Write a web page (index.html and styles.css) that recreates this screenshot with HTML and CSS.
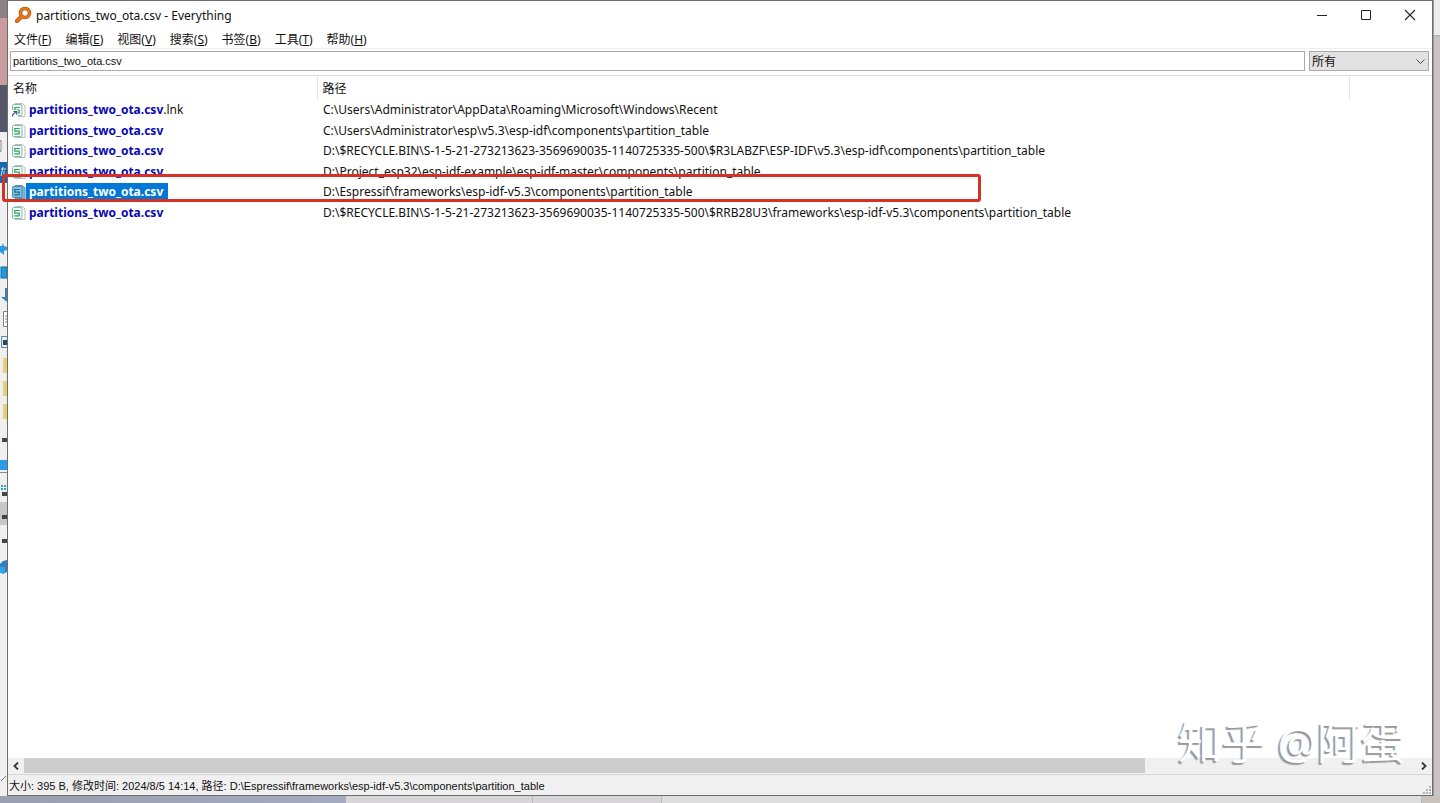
FILE: index.html
```html
<!DOCTYPE html>
<html lang="zh-CN">
<head>
    <meta charset="UTF-8">
    <meta name="viewport" content="width=device-width, initial-scale=1.0">
    <title>partitions_two_ota.csv - Everything</title>
    <link rel="stylesheet" href="styles.css">
</head>
<body>
    <!-- icons shared by the file rows -->
    <svg class="defs" width="0" height="0" aria-hidden="true">
        <symbol id="sheet" viewBox="0 0 15 16">
            <path class="page" d="M4 1.500h7.500l2.500 2.500v10.500H4z" fill="#fff" stroke="#b4bdc3"/>
            <rect class="page" x="1.500" y="2.500" width="9.500" height="11" rx="1" fill="#f5fcf8" stroke="#7fbf9c"/>
            <path d="M8.700 5.500H3.800v2.600h4.400v2.700H3.300" fill="none" stroke="#2f9e62" stroke-width="1.200"/>
        </symbol>
        <symbol id="sheet-link" viewBox="0 0 15 16">
            <use href="#sheet"/>
            <rect x="0" y="8" width="7" height="8" fill="#fff"/>
            <path d="M1.500 14.500c0-2 1-3.500 3.500-4M2.500 9.500h3.300v3.300" fill="none" stroke="#2b4f8f" stroke-width="1.200"/>
        </symbol>
        <symbol id="sheet-selected" viewBox="0 0 15 16">
            <path d="M4 1.500h7.500l2.500 2.500v10.500H4z" fill="#7db4dd" stroke="#5b93bd"/>
            <rect x="1.500" y="2.500" width="9.500" height="11" rx="1" fill="#86c0e2" stroke="#3f8fae"/>
            <path d="M8.700 5.500H3.800v2.600h4.400v2.700H3.300" fill="none" stroke="#17708f" stroke-width="1.200"/>
        </symbol>
    </svg>

    <div class="desktop">
        <div class="side-left">
            <svg width="7" height="796" viewBox="0 0 7 796" aria-hidden="true">
                <rect width="7" height="85" fill="#c99d9e"/>
                <rect width="7" height="18" fill="#8c8084"/>
                <rect y="85" width="7" height="47" fill="#555768"/>
                <rect y="132" width="7" height="664" fill="#efefef"/>
                <path d="M0 140.500h1v11h-1" stroke="#888" fill="none"/>
                <rect y="162" width="7" height="21" fill="#1568ad"/>
                <path d="M1 169h5M3 167l-2 9M4 171v6" stroke="#cfe3f5" fill="none"/>
                <path d="M0 246h2l1-3 1 3 3 1v3l-3 1v4l-4-3z" fill="#2d9be0"/>
                <rect x="1" y="267" width="6" height="11" fill="#1d9be0" stroke="#176b9e"/>
                <path d="M7 288v14l-6-5h4v-9z" fill="#3b7fb8"/>
                <path d="M3.500 311.500h4v15h-4zM5 316h2M5 319h2M5 322h2" fill="#fff" stroke="#7d878e"/>
                <rect x="1.500" y="336.500" width="6" height="11" fill="#d8edf8" stroke="#718796"/>
                <rect x="3" y="340" width="4" height="5" fill="#274b66"/>
                <path d="M3 358h4v15H3zM3 381h4v15H3zM3 404h4v15H3z" fill="#e5cf77"/>
                <rect y="502" width="7" height="23" fill="#c8c8c8"/>
                <path d="M2 438h5v4H2zM2 492h5v4H2zM2 515h5v4H2zM2 539h5v4H2z" fill="#444"/>
                <rect y="460" width="7" height="10" fill="#2e9be6"/>
                <path d="M0 472.500h7" stroke="#889"/>
                <path d="M1 485h2v2H1zM4 485h2v2H4zM1 488h2v2H1zM4 488h2v2H4z" fill="#29a6bd"/>
                <path d="M3 561l4-1v12l-4 2-3-2v-8z" fill="#347fb5"/>
                <path d="M0 567h5v6H0z" fill="#2ba5ee"/>
                <path d="M1 781l5-5" stroke="#777"/>
            </svg>
        </div>

        <main class="window">
            <header class="titlebar">
                <svg class="app-icon" width="17" height="16" viewBox="0 0 17 16" aria-hidden="true">
                    <path d="M6.500 9.500L2 14" stroke="#b5530b" stroke-width="4" stroke-linecap="round"/>
                    <circle cx="10" cy="6" r="4.500" fill="#fff" stroke="#b5530b" stroke-width="3.500"/>
                    <circle cx="10" cy="6" r="4.500" fill="none" stroke="#e8791c" stroke-width="2"/>
                    <path d="M6.500 9.500L2 14" stroke="#e8791c" stroke-width="2.200" stroke-linecap="round"/>
                </svg>
                <h1>partitions_two_ota.csv - Everything</h1>
                <div class="window-buttons">
                    <button type="button" aria-label="最小化">
                        <svg width="12" height="12" viewBox="0 0 12 12"><path d="M1 6.500h10" stroke="#222"/></svg>
                    </button>
                    <button type="button" aria-label="最大化">
                        <svg width="12" height="12" viewBox="0 0 12 12"><path d="M1.500 1.500h9v9h-9z" fill="none" stroke="#222"/></svg>
                    </button>
                    <button type="button" aria-label="关闭">
                        <svg width="12" height="12" viewBox="0 0 12 12"><path d="M1 1l10 10M11 1L1 11" stroke="#222" stroke-width="1.100"/></svg>
                    </button>
                </div>
            </header>

            <nav class="menu">
                <a href="#">文件(<u>F</u>)</a>
                <a href="#">编辑(<u>E</u>)</a>
                <a href="#">视图(<u>V</u>)</a>
                <a href="#">搜索(<u>S</u>)</a>
                <a href="#">书签(<u>B</u>)</a>
                <a href="#">工具(<u>T</u>)</a>
                <a href="#">帮助(<u>H</u>)</a>
            </nav>

            <form class="search">
                <input type="text" value="partitions_two_ota.csv" aria-label="搜索">
                <div class="filter">
                    <select aria-label="筛选">
                        <option>所有</option>
                    </select>
                    <svg width="9" height="6" viewBox="0 0 9 6" aria-hidden="true"><path d="M.5.5l4 4 4-4" fill="none" stroke="#444"/></svg>
                </div>
            </form>

            <div class="results">
                <table>
                    <thead>
                        <tr>
                            <th class="col-name">名称</th>
                            <th class="col-path">路径</th>
                            <th class="col-rest"></th>
                        </tr>
                    </thead>
                    <tbody>
                        <tr>
                            <td><div class="file"><svg width="15" height="16"><use href="#sheet-link"/></svg><span><b>partitions_two_ota.csv</b>.lnk</span></div></td>
                            <td colspan="2">C:\Users\Administrator\AppData\Roaming\Microsoft\Windows\Recent</td>
                        </tr>
                        <tr>
                            <td><div class="file"><svg width="15" height="16"><use href="#sheet"/></svg><span><b>partitions_two_ota.csv</b></span></div></td>
                            <td colspan="2">C:\Users\Administrator\esp\v5.3\esp-idf\components\partition_table</td>
                        </tr>
                        <tr>
                            <td><div class="file"><svg width="15" height="16"><use href="#sheet"/></svg><span><b>partitions_two_ota.csv</b></span></div></td>
                            <td colspan="2">D:\$RECYCLE.BIN\S-1-5-21-273213623-3569690035-1140725335-500\$R3LABZF\ESP-IDF\v5.3\esp-idf\components\partition_table</td>
                        </tr>
                        <tr>
                            <td><div class="file"><svg width="15" height="16"><use href="#sheet"/></svg><span><b>partitions_two_ota.csv</b></span></div></td>
                            <td colspan="2">D:\Project_esp32\esp-idf-example\esp-idf-master\components\partition_table</td>
                        </tr>
                        <tr class="selected">
                            <td><div class="file"><svg width="15" height="16"><use href="#sheet-selected"/></svg><span><b>partitions_two_ota.csv</b></span></div></td>
                            <td colspan="2">D:\Espressif\frameworks\esp-idf-v5.3\components\partition_table</td>
                        </tr>
                        <tr>
                            <td><div class="file"><svg width="15" height="16"><use href="#sheet"/></svg><span><b>partitions_two_ota.csv</b></span></div></td>
                            <td colspan="2">D:\$RECYCLE.BIN\S-1-5-21-273213623-3569690035-1140725335-500\$RRB28U3\frameworks\esp-idf-v5.3\components\partition_table</td>
                        </tr>
                    </tbody>
                </table>
                <div class="marker"></div>
            </div>

            <div class="scrollbar">
                <button type="button" aria-label="向左滚动">
                    <svg width="6" height="8" viewBox="0 0 6 8"><path d="M5 .5L1.500 4 5 7.500" fill="none" stroke="#333" stroke-width="1.800"/></svg>
                </button>
                <div class="track"><div class="thumb"></div></div>
                <button type="button" aria-label="向右滚动">
                    <svg width="6" height="8" viewBox="0 0 6 8"><path d="M1 .5L4.500 4 1 7.500" fill="none" stroke="#333" stroke-width="1.800"/></svg>
                </button>
            </div>

            <footer class="status">
                <span>大小: 395 B, 修改时间: 2024/8/5 14:14, 路径: D:\Espressif\frameworks\esp-idf-v5.3\components\partition_table</span>
                <svg width="8" height="8" viewBox="0 0 8 8" aria-hidden="true"><path d="M6 0h2v2H6zM3 3h2v2H3zM6 3h2v2H6zM0 6h2v2H0zM3 6h2v2H3zM6 6h2v2H6z" fill="#b4b4b4"/></svg>
            </footer>

            <div class="watermark">知乎 @阿蛋</div>
        </main>

        <div class="side-right"></div>
        <div class="bottom">
            <div class="wallpaper"></div>
            <div class="pane"></div>
            <div class="pane"></div>
            <div class="pane wide"></div>
            <div class="edge"></div>
        </div>
    </div>
</body>
</html>
```

FILE: styles.css
```css
* {
    box-sizing: border-box;
}

body {
    margin: 0;
    font-family: "Noto Sans", "Noto Sans CJK SC", sans-serif;
    font-size: 12px;
    color: #111;
}

button {
    border: 0;
    padding: 0;
    background: none;
    display: flex;
    align-items: center;
    justify-content: center;
}

.defs {
    position: absolute;
}

/* what shows of the desktop around the window */
.desktop {
    display: grid;
    grid-template-columns: 7px 1fr 7px;
    grid-template-rows: 1fr 7px;
    height: 100vh;
    overflow: hidden;
}

.side-left {
    background: #efefef;
    overflow: hidden;
}

.side-left svg {
    display: block;
}

.side-right {
    background: linear-gradient(#ececec 35px, #aaa 35px, #c9c4c2 37px, #c9c4c2);
    border-left: 1px solid #999;
}

.bottom {
    grid-column: 1 / 4;
    display: flex;
    background: #c9c1be;
}

.wallpaper {
    width: 24%;
    background: linear-gradient(90deg, #999fae, #a5abc0);
}

.pane {
    width: 13%;
    background: #d8d6d9;
    border-right: 1px solid #bbb;
}

.pane + .pane {
    width: 9%;
}

.pane.wide {
    flex: 1;
    background: #dedede;
}

.edge {
    width: 18px;
}

/* window */
.window {
    position: relative;
    display: flex;
    flex-direction: column;
    min-width: 0;
    background: #fff;
    border: 1px solid #6e6e6e;
}

.titlebar {
    display: flex;
    align-items: center;
    height: 28px;
    padding-left: 7px;
}

.titlebar h1 {
    margin: 0 0 0 4px;
    font-size: 12px;
    font-weight: normal;
}

.window-buttons {
    display: flex;
    margin-left: auto;
}

.window-buttons button {
    width: 44px;
    height: 28px;
}

.menu {
    display: flex;
    gap: 14px;
    height: 20px;
    padding-left: 6px;
    line-height: 22px;
    border-bottom: 1px solid #eee;
}

.menu a {
    color: #111;
    text-decoration: none;
}

.search {
    display: flex;
    gap: 4px;
    height: 27px;
    padding: 2px 3px 4px 2px;
    border-bottom: 1px solid #ddd;
}

.search input {
    flex: 1;
    min-width: 0;
    padding: 0 2px;
    border: 1px solid #aaa;
    font-family: "Liberation Sans", "Noto Sans CJK SC", sans-serif;
    font-size: 11px;
    color: #111;
}

.filter {
    position: relative;
    width: 120px;
}

.filter select {
    display: block;
    width: 100%;
    height: 100%;
    padding: 0 2px;
    appearance: none;
    border: 1px solid #aaa;
    border-radius: 0;
    background: #e2e2e2;
    font-family: inherit;
    font-size: 12px;
    color: #111;
}

.filter svg {
    position: absolute;
    right: 4px;
    top: 8px;
}

/* result list */
.results {
    position: relative;
    flex: 1;
    min-height: 0;
}

table {
    width: 100%;
    height: 147px;
    table-layout: fixed;
    border-collapse: collapse;
}

th {
    height: 24px;
    padding: 0 5px;
    text-align: left;
    font-weight: normal;
    border-right: 1px solid #e5e5e5;
}

.col-name {
    width: 309px;
}

.col-rest {
    width: 83px;
    border-right: 0;
}

td {
    padding: 0 6px;
    line-height: 18px;
    white-space: nowrap;
}

td:first-child {
    padding: 0 3px;
}

.file {
    display: flex;
    align-items: center;
}

.file span {
    padding: 0 5px 0 3px;
}

.file b {
    color: #0808b4;
}

.selected .file span {
    background: #0078d7;
}

.selected .file b {
    color: #fff;
}

.marker {
    position: absolute;
    left: -6px;
    top: 98px;
    width: 979px;
    height: 28px;
    border: 3px solid #d93025;
    border-radius: 3px;
}

.scrollbar {
    display: flex;
    height: 16px;
    background: #f0f0f0;
}

.scrollbar button {
    width: 16px;
}

.track {
    flex: 1;
}

.thumb {
    width: 80.5%;
    height: 15px;
    background: #cdcdcd;
}

.status {
    display: flex;
    justify-content: space-between;
    align-items: center;
    height: 21px;
    padding: 0 1px;
    background: #f0f0f0;
    border-top: 1px solid #d7d7d7;
    font-family: "Liberation Sans", "Noto Sans CJK SC", sans-serif;
    font-size: 11px;
}

.status svg {
    align-self: flex-end;
    margin-bottom: 1px;
}

.watermark {
    position: absolute;
    right: 27px;
    bottom: 23px;
    font-size: 44px;
    line-height: 60px;
    color: #fff;
    text-shadow: -2px 2px 1px #999;
}
```
